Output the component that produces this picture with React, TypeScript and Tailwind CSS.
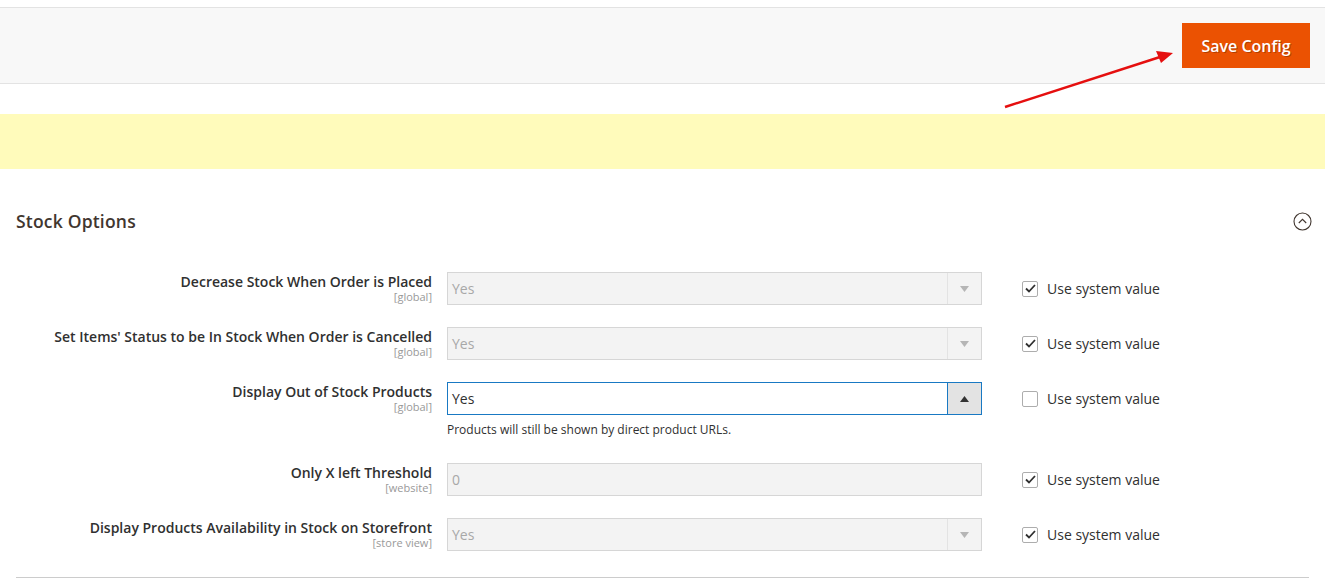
const rows = [
  { label: "Decrease Stock When Order is Placed", scope: "[global]", value: "Yes", type: "select", checked: true },
  { label: "Set Items' Status to be In Stock When Order is Cancelled", scope: "[global]", value: "Yes", type: "select", checked: true },
  {
    label: "Display Out of Stock Products",
    scope: "[global]",
    value: "Yes",
    type: "active",
    checked: false,
    note: "Products will still be shown by direct product URLs.",
  },
  { label: "Only X left Threshold", scope: "[website]", value: "0", type: "text", checked: true },
  { label: "Display Products Availability in Stock on Storefront", scope: "[store view]", value: "Yes", type: "select", checked: true },
];

function Field({ type, value }: { type: string; value: string }) {
  if (type === "active") {
    return (
      <div className="flex h-[33px] w-[535px] border border-[#1979c3] bg-white">
        <div className="flex flex-1 items-center px-[4px] text-[14px] text-[#303030]">{value}</div>
        <div className="flex w-[34px] items-center justify-center border-l border-[#1979c3] bg-[#e3e3e3]">
          <svg width="9" height="6" viewBox="0 0 9 6">
            <path d="M0 6 L4.5 0 L9 6 Z" fill="#333" />
          </svg>
        </div>
      </div>
    );
  }
  return (
    <div className="flex h-[33px] w-[535px] border border-[#d6d6d6] bg-[#f3f3f3]">
      <div className="flex flex-1 items-center px-[4px] text-[14px] text-[#a8a8a8]">{value}</div>
      {type === "select" && (
        <div className="flex w-[34px] items-center justify-center border-l border-[#e3e3e3]">
          <svg width="9" height="6" viewBox="0 0 9 6">
            <path d="M0 0 L9 0 L4.5 6 Z" fill="#b5b5b5" />
          </svg>
        </div>
      )}
    </div>
  );
}

function Checkbox({ checked }: { checked: boolean }) {
  return (
    <div className="flex h-[16px] w-[16px] items-center justify-center rounded-[2px] border border-[#adadad] bg-white">
      {checked && (
        <svg width="11" height="9" viewBox="0 0 11 9">
          <path d="M1 4.5 L4 7.5 L10 1" fill="none" stroke="#303030" strokeWidth="1.8" />
        </svg>
      )}
    </div>
  );
}

export default function App() {
  return (
    <div className="relative h-[585px] w-[1342px] overflow-hidden bg-white font-['Open_Sans',sans-serif] text-[#303030]">
      <div className="w-[1325px]">
        {/* page actions */}
        <div className="mt-[7px] flex h-[77px] items-center justify-end border-y border-[#e3e3e3] bg-[#f8f8f8] pr-[15px]">
          <button className="h-[45px] w-[128px] bg-[#eb5202] text-[16px] font-semibold text-white [text-shadow:1px_1px_0_rgba(0,0,0,0.25)]">
            Save Config
          </button>
        </div>

        {/* message */}
        <div className="mt-[30px] h-[55px] bg-[#fffbbb]" />

        {/* section */}
        <div className="mx-[16px] border-b border-[#cccccc] pb-[4px]">
          <div className="flex h-[103px] items-center justify-between pt-[1px]">
            <h2 className="text-[17.5px] font-semibold tracking-[0.2px] text-[#41362f]">Stock Options</h2>
            <svg width="19" height="19" viewBox="0 0 19 19" className="mr-[-3px]">
              <circle cx="9.5" cy="9.5" r="8.5" fill="none" stroke="#41362f" strokeWidth="1.1" />
              <path d="M5.8 11 L9.5 7.3 L13.2 11" fill="none" stroke="#41362f" strokeWidth="1.1" />
            </svg>
          </div>

          <div className="flex flex-col">
            {rows.map((r, i) => (
              <div key={i} className={r.note ? "flex h-[81px] items-start" : "flex h-[55px] items-start"}>
                <div className="w-[416px] pt-[1px] text-right leading-none">
                  <div className="text-[14px] font-semibold text-[#303030] leading-[18px]">{r.label}</div>
                  <div className="mt-[-1px] text-[11px] text-[#999] leading-[14px]">{r.scope}</div>
                </div>
                <div className="ml-[15px]">
                  <Field type={r.type} value={r.value} />
                  {r.note && <div className="mt-[8px] text-[12px] leading-[14px] text-[#303030]">{r.note}</div>}
                </div>
                <div className="ml-[40px] flex h-[33px] items-center gap-[9px]">
                  <Checkbox checked={r.checked} />
                  <span className="text-[14px] text-[#303030]">Use system value</span>
                </div>
              </div>
            ))}
          </div>
        </div>
      </div>

      {/* annotation arrow */}
      <svg className="absolute left-0 top-0" width="1342" height="585" viewBox="0 0 1342 585">
        <line x1="1005" y1="107" x2="1160" y2="57" stroke="#e50f0f" strokeWidth="2.5" />
        <path d="M1173 53 L1156 51 L1161 63 Z" fill="#e50f0f" />
      </svg>
    </div>
  );
}
